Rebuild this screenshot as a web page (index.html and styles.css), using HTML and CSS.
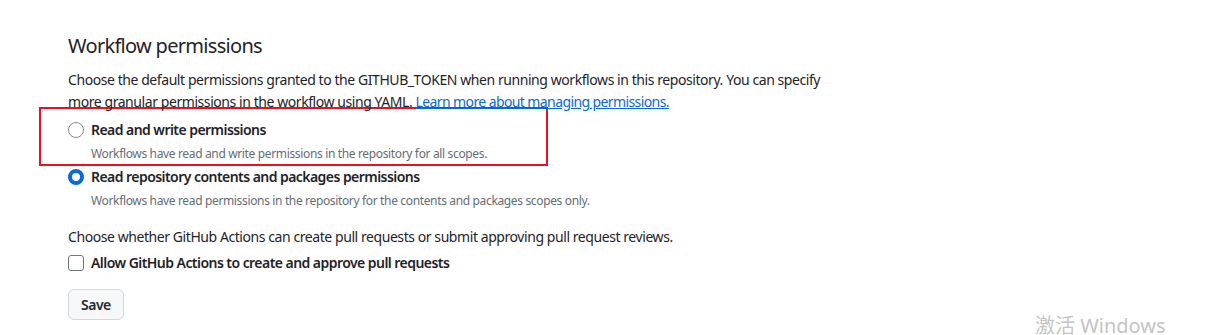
FILE: index.html
```html
<!DOCTYPE html>
<html lang="en">
<head>
    <meta charset="UTF-8">
    <title>Workflow permissions</title>
    <link rel="stylesheet" href="styles.css">
</head>
<body>
    <div class="settings">
        <h2 class="subhead">Workflow permissions</h2>
        <p class="note">Choose the default permissions granted to the GITHUB_TOKEN when running workflows in this repository. You can specify more granular permissions in the workflow using YAML. <a href="#">Learn more about managing permissions.</a></p>

        <div class="highlight">
            <div class="option">
                <span class="radio"></span>
                <div>
                    <div class="option-label">Read and write permissions</div>
                    <div class="option-note">Workflows have read and write permissions in the repository for all scopes.</div>
                </div>
            </div>
        </div>
        <div class="option">
            <span class="radio checked"></span>
            <div>
                <div class="option-label">Read repository contents and packages permissions</div>
                <div class="option-note">Workflows have read permissions in the repository for the contents and packages scopes only.</div>
            </div>
        </div>

        <p class="note second">Choose whether GitHub Actions can create pull requests or submit approving pull request reviews.</p>
        <div class="check-row">
            <span class="checkbox"></span>
            <span class="option-label">Allow GitHub Actions to create and approve pull requests</span>
        </div>
        <button class="btn">Save</button>
    </div>
    <div class="watermark">激活 Windows</div>
</body>
</html>
```

FILE: styles.css
```css
body {
    margin: 0;
    font-family: "Noto Sans", "Open Sans", sans-serif;
    color: #1f2328;
    background: #ffffff;
    height: 335px;
    overflow: hidden;
    position: relative;
}
.settings {
    padding: 33px 0 0 68px;
    width: 760px;
    letter-spacing: -0.43px;
}
.subhead {
    margin: 0;
    font-size: 20px;
    font-weight: 400;
    line-height: 26px;
    letter-spacing: -0.7px;
}
.note {
    margin: 10px 0 0;
    font-size: 14px;
    line-height: 22px;
}
.note a {
    color: #0969da;
    letter-spacing: -0.6px;
}
.highlight {
    margin: -6px 0 0 -29px;
    width: 478px;
    border: 2px solid #e81123;
    padding: 10px 0 1px 27px;
}
.option {
    display: flex;
    align-items: flex-start;
    gap: 7px;
}
.radio {
    width: 16px;
    height: 16px;
    box-sizing: border-box;
    border: 1px solid #858c94;
    border-radius: 50%;
    margin-top: 3px;
    flex: none;
}
.radio.checked {
    border: 4px solid #0969da;
}
.option-label {
    font-size: 14px;
    font-weight: 600;
    line-height: 22px;
    letter-spacing: -0.55px;
}
.option-note {
    font-size: 12px;
    color: #656d76;
    line-height: 18px;
    margin-top: 4px;
    letter-spacing: -0.35px;
}
.second {
    margin-top: 16px;
}
.check-row {
    display: flex;
    align-items: center;
    gap: 7px;
    margin-top: 4px;
}
.checkbox {
    width: 16px;
    height: 16px;
    box-sizing: border-box;
    border: 1px solid #6e7781;
    border-radius: 3px;
}
.btn {
    margin-top: 15px;
    font-family: inherit;
    font-size: 14px;
    font-weight: 600;
    letter-spacing: -0.5px;
    color: #24292f;
    background: #f6f8fa;
    border: 1px solid #d0d7de;
    border-radius: 6px;
    padding: 0 12px;
    height: 31px;
}
.watermark {
    position: absolute;
    left: 1035px;
    top: 310px;
    font-size: 20px;
    color: #c4c4c4;
    font-family: "Noto Sans", "Noto Sans CJK SC", sans-serif;
}
```
